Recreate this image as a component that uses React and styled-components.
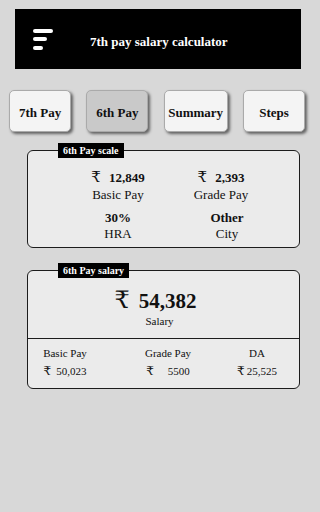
import React from "react"
import styled, { createGlobalStyle } from "styled-components"

const GlobalStyle = createGlobalStyle`
  html, body {
    margin: 0;
    padding: 0;
    background: #d8d8d8;
  }
  body {
    font-family: "Liberation Serif", "DejaVu Serif", serif;
    color: #111;
  }
`

const Page = styled.div`
  width: 320px;
  height: 512px;
  padding-top: 9px;
  box-sizing: border-box;
  background: #d8d8d8;
`

const Header = styled.div`
  margin-left: 15px;
  width: 286px;
  height: 60px;
  background: #000;
  display: flex;
  align-items: center;
  padding-left: 18px;
  box-sizing: border-box;
`

const MenuIcon = styled.div`
  display: flex;
  flex-direction: column;
  gap: 4.5px;
  width: 20px;
  span {
    display: block;
    height: 4px;
    border-radius: 2px;
    background: #fff;
  }
`

const Title = styled.div`
  margin-left: 37px;
  margin-top: 5px;
  color: #fff;
  font-weight: bold;
  font-size: 13px;
`

const Tabs = styled.div`
  display: flex;
  justify-content: space-between;
  margin: 21px 15px 0 9px;
`

const Tab = styled.div`
  width: ${(p) => p.w || 62}px;
  height: 42px;
  box-sizing: border-box;
  border-radius: 5px;
  border: 1px solid #aaa;
  background: ${(p) => (p.active ? "#c9c9c9" : "#f4f4f4")};
  box-shadow: 2px 2px 3px rgba(0, 0, 0, 0.55);
  display: flex;
  align-items: center;
  justify-content: center;
  padding-top: 3px;
  font-weight: bold;
  font-size: 13px;
`

const Card = styled.div`
  position: relative;
  margin: ${(p) => p.top}px 0 0 27px;
  width: 273px;
  box-sizing: border-box;
  border: 1.5px solid #1c1c1c;
  border-radius: 6px;
  background: #ebebeb;
`

const Label = styled.div`
  position: absolute;
  top: -8px;
  left: 30px;
  background: #000;
  color: #fff;
  font-weight: bold;
  font-size: 10px;
  line-height: 15px;
  padding: 0 5px;
`

const ScaleGrid = styled.div`
  display: grid;
  grid-template-columns: 102px 110px;
  padding: 18px 0 5px 39px;
  row-gap: 6px;
`

const Cell = styled.div`
  display: flex;
  flex-direction: column;
  align-items: center;
  transform: translateX(${(p) => p.shift || 0}px);
`

const Value = styled.div`
  font-weight: bold;
  font-size: 13px;
  line-height: 17px;
  .r {
    font-weight: normal;
    font-size: 15px;
  }
`

const Caption = styled.div`
  font-size: 13px;
  line-height: 16px;
  margin-top: ${(p) => p.gap || 0}px;
`

const Top = styled.div`
  display: flex;
  flex-direction: column;
  align-items: center;
  padding: 16px 16px 11px 0;
  border-bottom: 1.5px solid #1c1c1c;
`

const Big = styled.div`
  font-weight: bold;
  font-size: 21px;
  line-height: 27px;
  .r {
    font-weight: normal;
    font-size: 24px;
  }
`

const Small = styled.div`
  font-size: 11px;
  line-height: 12px;
  margin-left: 8px;
`

const Bottom = styled.div`
  display: grid;
  grid-template-columns: 74px 132px 46px;
  padding: 7px 0 10px 0;
  row-gap: 4px;
  font-size: 11px;
  line-height: 14px;
  text-align: center;
  .r {
    font-size: 12px;
  }
`

const Rupee = ({ gap = 5 }) => (
  <span className="r" style={{ marginRight: gap }}>
    ₹
  </span>
)

export default function App() {
  return (
    <Page>
      <GlobalStyle />
      <Header>
        <MenuIcon>
          <span style={{ width: 20 }} />
          <span style={{ width: 14 }} />
          <span style={{ width: 10 }} />
        </MenuIcon>
        <Title>7th pay salary calculator</Title>
      </Header>

      <Tabs>
        <Tab>7th Pay</Tab>
        <Tab active>6th Pay</Tab>
        <Tab w={64}>Summary</Tab>
        <Tab>Steps</Tab>
      </Tabs>

      <Card top={18}>
        <Label>6th Pay scale</Label>
        <ScaleGrid>
          <Cell>
            <Value>
              <Rupee gap={8} />
              12,849
            </Value>
            <Caption gap={1}>Basic Pay</Caption>
          </Cell>
          <Cell shift={-3}>
            <Value>
              <Rupee gap={8} />
              2,393
            </Value>
            <Caption gap={1}>Grade Pay</Caption>
          </Cell>
          <Cell>
            <Value>30%</Value>
            <Caption>HRA</Caption>
          </Cell>
          <Cell shift={3}>
            <Value>Other</Value>
            <Caption>City</Caption>
          </Cell>
        </ScaleGrid>
      </Card>

      <Card top={22}>
        <Label>6th Pay salary</Label>
        <Top>
          <Big>
            <Rupee gap={9} />
            54,382
          </Big>
          <Small>Salary</Small>
        </Top>
        <Bottom>
          <div>Basic Pay</div>
          <div>Grade Pay</div>
          <div>DA</div>
          <div>
            <Rupee gap={5} />
            50,023
          </div>
          <div>
            <Rupee gap={14} />
            5500
          </div>
          <div style={{ whiteSpace: "nowrap" }}>
            <Rupee gap={2} />
            25,525
          </div>
        </Bottom>
      </Card>
    </Page>
  )
}
